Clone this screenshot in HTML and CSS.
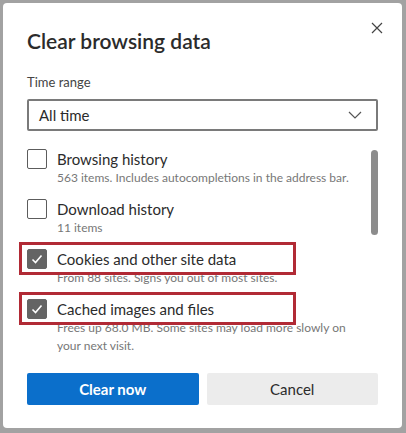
FILE: index.html
```html
<!DOCTYPE html>
<html>
<head>
    <title>Clear browsing data</title>
    <link rel="stylesheet" href="styles.css">
</head>
<body>
    <div class="dialog">
        <button class="close" aria-label="Close">
            <svg width="12" height="12" viewBox="0 0 12 12"><path d="M1 1L11 11M11 1L1 11" stroke="#444" stroke-width="1.2"/></svg>
        </button>
        <h1 class="title">Clear browsing data</h1>

        <div class="label">Time range</div>
        <div class="select">
            <span>All time</span>
            <svg width="14" height="8" viewBox="0 0 14 8"><path d="M1 1L7 7L13 1" fill="none" stroke="#555" stroke-width="1.2"/></svg>
        </div>

        <div class="list">
            <div class="item">
                <span class="box"></span>
                <div class="text">
                    <div class="name">Browsing history</div>
                    <div class="desc">563 items. Includes autocompletions in the address bar.</div>
                </div>
            </div>
            <div class="item">
                <span class="box"></span>
                <div class="text">
                    <div class="name">Download history</div>
                    <div class="desc">11 items</div>
                </div>
            </div>
            <div class="item">
                <span class="box checked"><svg width="14" height="14" viewBox="0 0 14 14"><path d="M2.5 7.5L5.5 10.5L11.5 3.5" fill="none" stroke="#fff" stroke-width="1.6"/></svg></span>
                <div class="text">
                    <div class="name">Cookies and other site data</div>
                    <div class="desc">From 88 sites. Signs you out of most sites.</div>
                </div>
                <span class="highlight"></span>
            </div>
            <div class="item">
                <span class="box checked"><svg width="14" height="14" viewBox="0 0 14 14"><path d="M2.5 7.5L5.5 10.5L11.5 3.5" fill="none" stroke="#fff" stroke-width="1.6"/></svg></span>
                <div class="text">
                    <div class="name">Cached images and files</div>
                    <div class="desc">Frees up 68.0 MB. Some sites may load more slowly on your next visit.</div>
                </div>
                <span class="highlight"></span>
            </div>
            <div class="scrollbar"></div>
        </div>

        <div class="buttons">
            <button class="btn primary">Clear now</button>
            <button class="btn">Cancel</button>
        </div>
    </div>
</body>
</html>
```

FILE: styles.css
```css
body {
    margin: 0;
    background-color: #a2a2a2;
    font-family: Lato, "Noto Sans", sans-serif;
    color: #333;
}

.dialog {
    position: relative;
    margin: 3px 4px 5px 3px;
    height: 425px;
    box-sizing: border-box;
    padding: 25px 24px 0 24px;
    background-color: #fff;
    border-radius: 4px;
}

.close {
    position: absolute;
    top: 13px;
    right: 13px;
    width: 24px;
    height: 24px;
    padding: 0;
    border: none;
    background: none;
    display: flex;
    align-items: center;
    justify-content: center;
}

.title {
    margin: 0;
    font-size: 21px;
    line-height: 26px;
    font-weight: 600;
    color: #2b2b2b;
}

.label {
    margin-top: 19px;
    font-size: 13px;
    line-height: 18px;
    color: #444;
}

.select {
    margin-top: 8px;
    height: 32px;
    box-sizing: border-box;
    border: 2px solid #7a7a7a;
    border-radius: 2px;
    display: flex;
    align-items: center;
    justify-content: space-between;
    padding: 0 14px 0 10px;
    font-size: 15px;
    color: #2b2b2b;
}

.list {
    position: relative;
    margin-top: 18px;
    display: flex;
    flex-direction: column;
    gap: 12px;
    height: 216px;
}

.item {
    position: relative;
    display: flex;
    gap: 10px;
}

.box {
    flex: none;
    width: 20px;
    height: 20px;
    box-sizing: border-box;
    border: 1px solid #5c5c5c;
    border-radius: 2px;
    display: flex;
    align-items: center;
    justify-content: center;
}

.box.checked {
    background-color: #646464;
    border-color: #646464;
}

.name {
    font-size: 15px;
    line-height: 20px;
    color: #2b2b2b;
}

.desc {
    width: 300px;
    font-size: 12px;
    line-height: 18px;
    color: #777;
}

.highlight {
    position: absolute;
    left: -8px;
    top: -7px;
    width: 277px;
    height: 33px;
    box-sizing: border-box;
    border: 3px solid #b12a35;
}

.scrollbar {
    position: absolute;
    right: 0;
    top: 1px;
    width: 7px;
    height: 85px;
    border-radius: 4px;
    background-color: #8c8c8c;
}

.buttons {
    margin-top: 8px;
    display: flex;
    gap: 8px;
}

.btn {
    flex: 1;
    height: 32px;
    border: none;
    border-radius: 2px;
    background-color: #ececec;
    font-family: Lato, "Noto Sans", sans-serif;
    font-size: 15px;
    color: #2b2b2b;
}

.btn.primary {
    background-color: #0b6fcb;
    color: #fff;
    font-weight: 700;
}
```
